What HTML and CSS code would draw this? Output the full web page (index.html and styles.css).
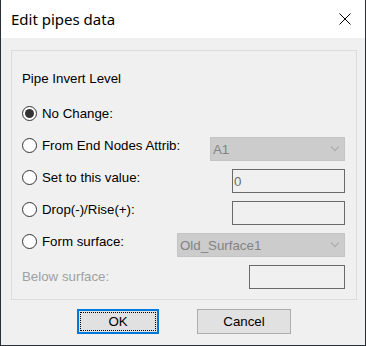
FILE: index.html
```html
<!DOCTYPE html>
<html lang="en">
<head>
    <meta charset="UTF-8">
    <title>Edit pipes data</title>
    <link rel="stylesheet" href="styles.css">
</head>
<body>
    <div class="dialog">
        <div class="titlebar">
            <span class="title">Edit pipes data</span>
            <span class="close">
                <svg width="12" height="12" viewBox="0 0 12 12">
                    <path d="M0.5 0.5 L11.5 11.5 M11.5 0.5 L0.5 11.5" stroke="#000" stroke-width="1" fill="none"/>
                </svg>
            </span>
        </div>
        <div class="content">
            <div class="group">
                <div class="group-title">Pipe Invert Level</div>

                <div class="row">
                    <label class="opt"><span class="radio checked"></span>No Change:</label>
                </div>
                <div class="row">
                    <label class="opt"><span class="radio"></span>From End Nodes Attrib:</label>
                    <div class="combo combo-attrib"><span>A1</span><i class="chev"></i></div>
                </div>
                <div class="row">
                    <label class="opt"><span class="radio"></span>Set to this value:</label>
                    <div class="field field-value">0</div>
                </div>
                <div class="row">
                    <label class="opt"><span class="radio"></span>Drop(-)/Rise(+):</label>
                    <div class="field field-value"></div>
                </div>
                <div class="row">
                    <label class="opt"><span class="radio"></span>Form surface:</label>
                    <div class="combo combo-surface"><span>Old_Surface1</span><i class="chev"></i></div>
                </div>
                <div class="row row-last">
                    <span class="disabled-label">Below surface:</span>
                    <div class="field field-below"></div>
                </div>
            </div>

            <div class="buttons">
                <button class="btn btn-ok"><span>OK</span></button>
                <button class="btn btn-cancel">Cancel</button>
            </div>
        </div>
    </div>
</body>
</html>
```

FILE: styles.css
```css
html, body {
    margin: 0;
    padding: 0;
}
body {
    font-family: "Liberation Sans", Arial, sans-serif;
    font-size: 13.3px;
    line-height: 15px;
    color: #000;
    background: #f0f0f0;
}
.dialog {
    width: 366px;
    height: 346px;
    box-sizing: border-box;
    border-left: 1px solid #2a3038;
    border-right: 1px solid #2a3038;
    border-bottom: 1px solid #2a3038;
    display: flex;
    flex-direction: column;
    background: #f0f0f0;
}
.titlebar {
    height: 38px;
    flex: none;
    background: #fff;
    display: flex;
    align-items: center;
    justify-content: space-between;
    padding: 0 14px 0 10px;
}
.title {
    font-family: "Noto Sans", "Open Sans", sans-serif;
    font-size: 15px;
    color: #000;
    margin-top: 1px;
}
.close {
    display: flex;
    width: 12px;
    height: 12px;
}
.content {
    flex: 1;
    padding-top: 12px;
}
.group {
    margin-left: 10px;
    width: 346px;
    height: 250px;
    box-sizing: border-box;
    border: 1px solid #dcdcdc;
    padding: 20px 11px 0 10px;
}
.group-title {
    margin-bottom: 11px;
}
.row {
    height: 32px;
    display: grid;
    grid-template-columns: 1fr auto;
    align-items: center;
}
.opt {
    display: flex;
    align-items: center;
    gap: 5px;
    padding-top: 1px;
}
.radio {
    width: 15px;
    height: 15px;
    box-sizing: border-box;
    border: 1px solid #333;
    border-radius: 50%;
    background: #fff;
    display: flex;
    align-items: center;
    justify-content: center;
}
.radio.checked::after {
    content: "";
    width: 9px;
    height: 9px;
    border-radius: 50%;
    background: #333;
}
.combo, .field {
    align-self: end;
    height: 24px;
    box-sizing: border-box;
    display: flex;
    align-items: center;
}
.combo {
    background: #cccccc;
    border: 1px solid #c4c4c4;
    color: #838383;
    justify-content: space-between;
    padding: 0 6px 0 2px;
}
.combo-attrib {
    width: 135px;
}
.combo-surface {
    width: 168px;
}
.chev {
    width: 5px;
    height: 5px;
    border-right: 1px solid #a8a8a8;
    border-bottom: 1px solid #a8a8a8;
    transform: rotate(45deg);
    margin-top: -4px;
}
.field {
    border: 1px solid #6a6a6a;
    color: #6d6d6d;
    padding-left: 1px;
}
.field-value {
    width: 113px;
}
.field-below {
    width: 96px;
}
.row-last {
    align-items: end;
}
.disabled-label {
    color: #a0a0a0;
    line-height: 24px;
}
.buttons {
    display: flex;
    justify-content: center;
    gap: 38px;
    margin-top: 9px;
}
.btn {
    height: 25px;
    box-sizing: border-box;
    background: #e1e1e1;
    font-family: "Liberation Sans", Arial, sans-serif;
    font-size: 13.3px;
    color: #000;
    padding: 0;
}
.btn-ok {
    width: 82px;
    border: 2px solid #0078d7;
    padding: 1px;
    margin-left: 2px;
}
.btn-ok span {
    display: flex;
    height: 100%;
    align-items: center;
    justify-content: center;
    border: 1px dotted #000;
    box-sizing: border-box;
}
.btn-cancel {
    width: 94px;
    border: 1px solid #adadad;
}
```
